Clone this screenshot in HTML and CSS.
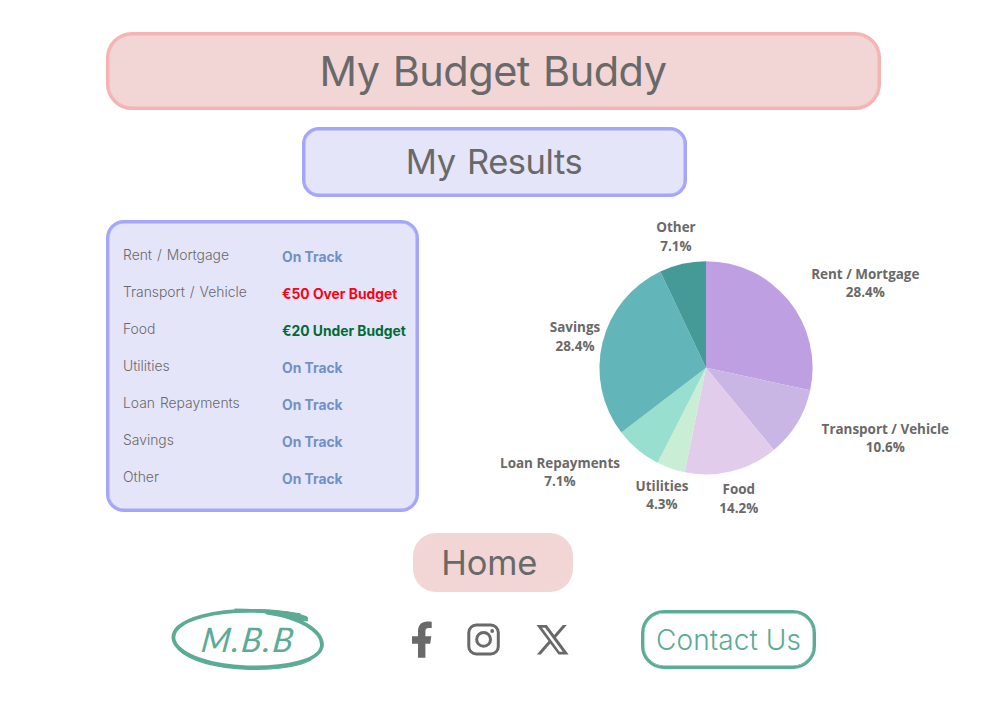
FILE: index.html
```html
<!DOCTYPE html>
<html lang="en">
<head>
<meta charset="utf-8">
<title>My Budget Buddy</title>
<link rel="stylesheet" href="styles.css">
</head>
<body>
<main class="page">
  <header class="banner"><h1>My Budget Buddy</h1></header>
  <div class="subtitle"><h2>My Results</h2></div>
  <section class="results">
    <dl class="panel">
      <div class="row"><dt>Rent / Mortgage</dt><dd>On Track</dd></div>
      <div class="row"><dt>Transport / Vehicle</dt><dd class="over">€50 Over Budget</dd></div>
      <div class="row"><dt>Food</dt><dd class="under">€20 Under Budget</dd></div>
      <div class="row"><dt>Utilities</dt><dd>On Track</dd></div>
      <div class="row"><dt>Loan Repayments</dt><dd>On Track</dd></div>
      <div class="row"><dt>Savings</dt><dd>On Track</dd></div>
      <div class="row"><dt>Other</dt><dd>On Track</dd></div>
    </dl>
    <svg class="chart" viewBox="-216 -152.8 470 306" width="470" height="306">
      <g>
        <path fill="#bea0e2" d="M0 0V-106.6A106.6 106.6 0 0 1 104.2 22.5Z"/>
        <path fill="#c9b6e4" d="M0 0L104.2 22.5A106.6 106.6 0 0 1 67.9 82.1Z"/>
        <path fill="#e1ccec" d="M0 0L67.9 82.1A106.6 106.6 0 0 1 -21.3 104.5Z"/>
        <path fill="#c9edd5" d="M0 0L-21.3 104.5A106.6 106.6 0 0 1 -48.4 95Z"/>
        <path fill="#98dfcf" d="M0 0L-48.4 95A106.6 106.6 0 0 1 -84.7 64.7Z"/>
        <path fill="#62b5b8" d="M0 0L-84.7 64.7A106.6 106.6 0 0 1 -45.7 -96.3Z"/>
        <path fill="#459a98" d="M0 0L-45.7 -96.3A106.6 106.6 0 0 1 0 -106.6Z"/>
      </g>
      <g class="labels">
        <text x="-30" y="-136">Other</text><text x="-30" y="-117">7.1%</text>
        <text x="159.300" y="-89">Rent / Mortgage</text><text x="159.300" y="-70.400">28.4%</text>
        <text x="179.300" y="65.800">Transport / Vehicle</text><text x="179.300" y="84.400">10.6%</text>
        <text x="32.800" y="126.300">Food</text><text x="32.800" y="145.300">14.2%</text>
        <text x="-44" y="123.200">Utilities</text><text x="-44" y="141.500">4.3%</text>
        <text x="-146" y="99.800">Loan Repayments</text><text x="-146" y="118.500">7.1%</text>
        <text x="-131" y="-35.600">Savings</text><text x="-131" y="-16.800">28.4%</text>
      </g>
    </svg>
  </section>
  <a class="home">Home</a>
  <footer class="footer">
    <svg class="logo" viewBox="170 606 156 66" width="156" height="66" fill="none">
      <g stroke="#5cab94" stroke-linecap="round" stroke-linejoin="round">
        <path stroke-width="3.8" d="M306 618C286 610.500 235 607.500 203 616C180 622 171 631 174 641C180 656 211 666 247 667.300C285 668.500 321 661 322 645C322 631 300 617 267 612.500"/>
        <path stroke-width="1.400" d="M235 609.200C255 609.500 280 611 300 614"/>
        <path fill="#5cab94" stroke-width="1" d="M266 611C282 611 298 613 307 618L307.500 621C300 620.500 290 619 276 615Z"/>
        <path stroke-width="1.200" d="M178 649C190 661 214 668 250 669.300C280 670 299 666 311 660"/>
      </g>
      <text class="logo-text" transform="translate(200 652) skewX(-8)" textLength="92" lengthAdjust="spacing">M.B.B</text>
    </svg>
    <nav class="social">
      <svg viewBox="412 621 20 37" width="20" height="37"><path fill="#696969" d="M418 657.800V643.700H412V636.200H418V631.500C418 625 421.500 621.400 427.500 621.400C429 621.400 430.500 621.500 431.700 621.700V628H428.600C426 628 425.400 629.500 425.400 631.400V636.200H431.300L430.200 643.700H425.400V657.800Z"/></svg>
      <svg viewBox="467 623 33 33" width="33" height="33" fill="none" stroke="#696969" stroke-width="3"><rect x="468.800" y="625.100" width="29.500" height="28.800" rx="7.500"/><circle cx="483.600" cy="639.400" r="6.900"/><circle cx="492.200" cy="631" r="1.900" fill="#696969" stroke="none"/></svg>
      <svg viewBox="536 624 33 31" width="33" height="31"><path fill="#696969" fill-rule="evenodd" d="M536.500 625H546.800L554.200 634.900L562.800 625H566.800L556 637.500L568.600 654.500H558.500L550.300 643.500L540.800 654.500H536.800L548.500 640.900ZM542 627.700L559.600 651.800H562.800L545.100 627.700Z"/></svg>
    </nav>
    <a class="contact">Contact Us</a>
  </footer>
</main>
</body>
</html>
```
FILE: styles.css
```css
* { box-sizing: border-box; }
body { margin: 0; background: #fff; font-family: Inter, sans-serif; color: #696969; }
h1, h2, dl, dt, dd { margin: 0; font-weight: 400; }
.page { width: 986px; height: 701px; padding-top: 31.500px; display: flex; flex-direction: column; overflow: hidden; }
.banner, .subtitle, .home, .contact { display: flex; align-items: center; justify-content: center; white-space: nowrap; }
.banner { width: 775px; height: 78px; margin-left: 106px; background: #f2d6d6; border: 3px solid #f5b3b3; border-radius: 26px; box-shadow: inset 0 0 0 .5px #f5b3b3; }
h1 { font-size: 41.500px; line-height: 50px; letter-spacing: -0.520px; word-spacing: 2px; padding-right: 1px; }
.subtitle { width: 385px; height: 70px; margin: 17.500px 0 0 302px; background: #e5e5fa; border: 3px solid #a5a5fa; border-radius: 17px; box-shadow: inset 0 0 0 .5px #a5a5fa; }
h2 { font-size: 34.500px; line-height: 42px; letter-spacing: -0.450px; word-spacing: 2px; padding-right: 1px; }
.results { display: flex; margin: 23px 0 0 106px; height: 293px; }
.panel { width: 313px; height: 292px; padding: 16px 0 0 14px; background: #e5e5fa; border: 3px solid #a5a5fa; border-radius: 18px; flex: none; box-shadow: inset 0 0 0 .5px #a5a5fa; }
.row { display: grid; grid-template-columns: 159px 1fr; height: 37.050px; line-height: 32px; font-size: 13.900px; white-space: nowrap; }
dt { font-weight: 300; word-spacing: 1px; }
dd { padding-top: 2px; font-size: 13.830px; font-weight: 700; color: #7190c5; }
.over { color: #ff0014; }
.under { color: #006b36; }
.chart { margin: -5px 0 0 71px; flex: none; }
.labels { font: 700 13.450px "Open Sans", sans-serif; fill: #696969; text-anchor: middle; }
.home { width: 160px; height: 59px; margin: 20px 0 0 413.300px; padding: 0 8px 0 0; background: #f2d6d6; border-radius: 23px; font-size: 34.500px; letter-spacing: -0.200px; }
.footer { display: flex; margin: 14px 0 0 170px; height: 66px; }
.logo { flex: none; }
.logo-text { font: italic 400 34px Lato, sans-serif; fill: #5cab94; }
.social { display: flex; align-items: center; gap: 35.500px; width: 158px; margin-left: 86px; }
.social svg:nth-child(2) { margin-left: -.500px; }
.contact { width: 175px; height: 59px; margin: 4px 0 0 71px; border: 3px solid #5cab94; border-radius: 23px; color: #5cab94; font-size: 28px; font-weight: 350; letter-spacing: 0.050px; box-shadow: inset 0 0 0 .4px #5cab94; }
```
